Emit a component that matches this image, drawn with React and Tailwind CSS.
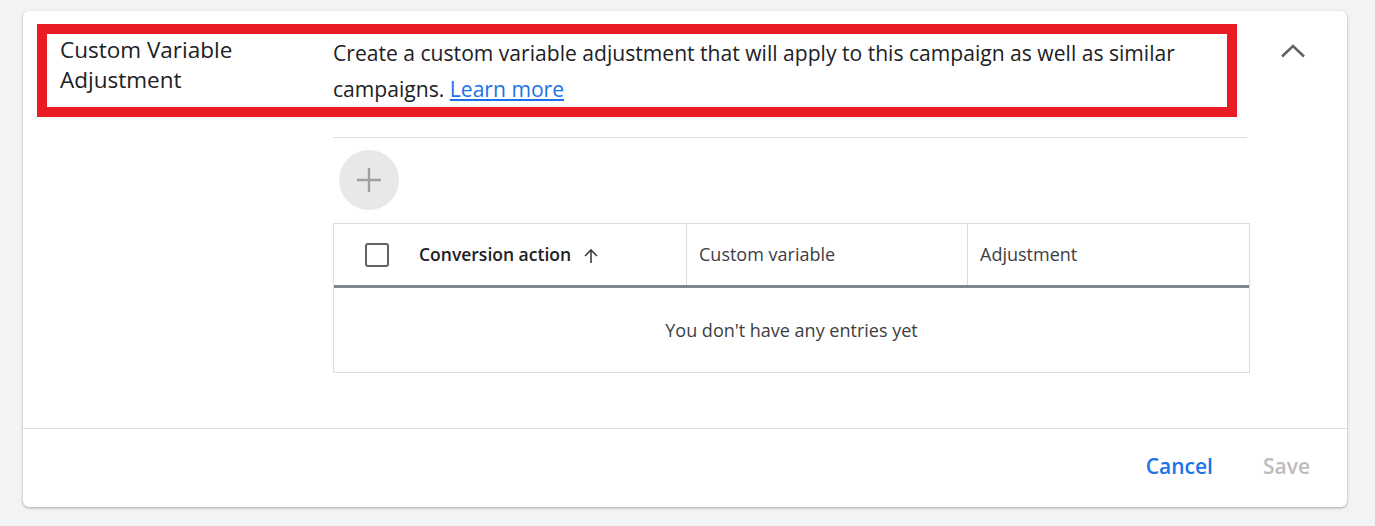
import React from "react";

export default function App() {
  const font = { fontFamily: "'Open Sans', Roboto, sans-serif" };
  return (
    <div className="w-full h-[526px] bg-[#f1f3f4] pt-[11px] pl-[23px] pr-[28px]" style={font}>
      <div className="h-[496px] bg-white rounded-[6px] shadow-[0_1px_3px_rgba(60,64,67,0.3),0_1px_2px_rgba(60,64,67,0.15)] flex flex-col">
        <div className="flex-1 flex flex-col">
          <div className="flex items-start mt-[13px] ml-[14px]">
            <div className="w-[1200px] h-[93px] border-[10px] border-[#e81c24] flex pl-[13px] pt-[1px]">
              <div className="w-[273px] shrink-0 text-[22.5px] leading-[30px] text-[#202124]">
                Custom Variable
                <br />
                Adjustment
              </div>
              <div className="w-[890px] text-[21.1px] leading-[36px] text-[#202124]">
                Create a custom variable adjustment that will apply to this campaign as well as similar
                <br />
                campaigns.{" "}
                <a href="#" className="text-[#1a73e8] underline">Learn more</a>
              </div>
            </div>
            <div className="ml-[44px] mt-[18px] w-[24px] h-[24px] flex items-center justify-center">
              <svg width="24" height="24" viewBox="0 0 24 24">
                <path d="M1 14.5 L12 4 L23 14.5" fill="none" stroke="#5f6368" strokeWidth="2.6" />
              </svg>
            </div>
          </div>
          <div className="ml-[310px] mt-[20px] w-[914px] border-t border-[#e0e0e0]"></div>
          <div className="ml-[316px] mt-[12px] w-[60px] h-[60px] rounded-full bg-[#e8e8e8] flex items-center justify-center">
            <svg width="26" height="26" viewBox="0 0 26 26">
              <path d="M13 1 V25 M1 13 H25" stroke="#a0a0a0" strokeWidth="2.4" />
            </svg>
          </div>
          <div className="ml-[310px] mt-[13px] w-[917px] border border-[#dadce0] text-[18px] text-[#3c4043]">
            <div className="flex h-[64px] border-b-[3px] border-[#80868b]">
              <div className="w-[353px] flex items-center border-r border-[#dadce0]">
                <div className="ml-[31px] w-[24px] h-[24px] border-2 border-[#5f6368] rounded-[3px]"></div>
                <span className="ml-[30px] font-semibold text-[#202124] text-[17.5px]">Conversion action</span>
                <svg className="ml-[11px] mt-[3px]" width="18" height="18" viewBox="0 0 18 18">
                  <path d="M9 16 V3 M3 9 L9 3 L15 9" fill="none" stroke="#3c4043" strokeWidth="1.6" />
                </svg>
              </div>
              <div className="w-[281px] flex items-center pl-[12px] border-r border-[#dadce0]">Custom variable</div>
              <div className="flex-1 flex items-center pl-[12px]">Adjustment</div>
            </div>
            <div className="h-[84px] flex items-center justify-center text-[#3c4043]">
              You don't have any entries yet
            </div>
          </div>
        </div>
        <div className="h-[79px] border-t border-[#e0e0e0] flex items-center justify-end pr-[37px] gap-[50px] text-[21px] font-semibold pb-[2px]">
          <span className="text-[#1a73e8]">Cancel</span>
          <span className="text-[#bdbdbd]">Save</span>
        </div>
      </div>
    </div>
  );
}
